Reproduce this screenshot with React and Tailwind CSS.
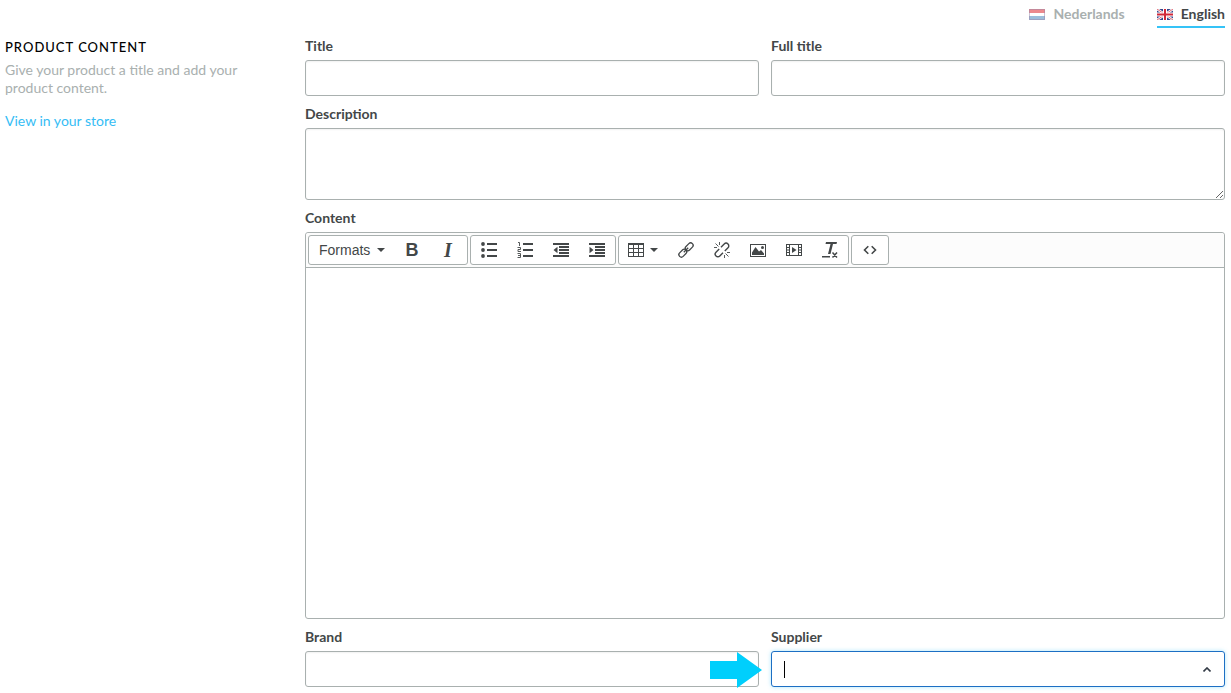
import React from "react";

function Icon({ children, className = "size-4" }) {
  return (
    <svg viewBox="0 0 16 16" className={className} fill="currentColor" aria-hidden="true">
      {children}
    </svg>
  );
}

const Caret = () => (
  <svg viewBox="0 0 8 4" className="h-1 w-2" fill="currentColor" aria-hidden="true">
    <path d="M0 0h8L4 4z" />
  </svg>
);

const BulletIcon = () => (
  <Icon>
    <circle cx="2" cy="2" r="1.900" />
    <circle cx="2" cy="8" r="1.900" />
    <circle cx="2" cy="14" r="1.900" />
    <path d="M6 1h10v2H6zM6 7h10v2H6zM6 13h10v2H6z" />
  </Icon>
);

const NumberIcon = () => (
  <svg viewBox="0 0 16 18" className="h-[18px] w-4" fill="currentColor" aria-hidden="true">
    <path d="M6 2h10v2H6zM6 8h10v2H6zM6 14h10v2H6z" />
    <g fill="none" stroke="currentColor" strokeWidth=".9">
      <path d="M1 1.500h1.500V5" />
      <path d="M.5 6.500h3v2h-2.500v2h3" />
      <path d="M.5 12.500h3v4h-3M1 14.500h2.500" />
    </g>
  </svg>
);

const OutdentIcon = () => (
  <Icon>
    <path d="M0 1h16v2H0zM6 4h10v2H6zM6 7h10v2H6zM6 10h10v2H6zM0 13h16v2H0zM4.500 4.800v6.400L.5 8z" />
  </Icon>
);

const IndentIcon = () => (
  <Icon>
    <path d="M0 1h16v2H0zM6 4h10v2H6zM6 7h10v2H6zM6 10h10v2H6zM0 13h16v2H0zM.5 4.800v6.400L4.500 8z" />
  </Icon>
);

const TableIcon = () => (
  <Icon>
    <path
      fillRule="evenodd"
      d="M0 1h16v14H0zM1 3v3h4V3zM6 3v3h4V3zM11 3v3h4V3zM1 7v3h4V7zM6 7v3h4V7zM11 7v3h4V7zM1 11v3h4v-3zM6 11v3h4v-3zM11 11v3h4v-3z"
    />
  </Icon>
);

const LinkIcon = () => (
  <Icon>
    <g fill="none" stroke="currentColor" strokeWidth="1.300">
      <rect x="-4.500" y="-2.500" width="9" height="5" rx="2.500" transform="translate(11.200 4.800) rotate(-45)" />
      <rect x="-4.500" y="-2.500" width="9" height="5" rx="2.500" transform="translate(4.800 11.200) rotate(-45)" />
      <path d="M5.800 10.200l4.400-4.400" />
    </g>
  </Icon>
);

const UnlinkIcon = () => (
  <Icon>
    <g fill="none" stroke="currentColor" strokeWidth="1.400">
      <path d="M7 5.200 10.200 2a2.600 2.600 0 0 1 3.800 3.800L10.800 9" />
      <path d="M9 10.800 5.800 14A2.600 2.600 0 0 1 2 10.200L5.200 7" />
      <path strokeWidth=".9" d="M1.500 1.500l3 3M5.500 0v3M0 5.500h3M11.500 11.500l3 3M10.500 13v3M13 10.500h3" />
    </g>
  </Icon>
);

const ImageIcon = () => (
  <Icon>
    <path fillRule="evenodd" d="M0 2h16v13H0zM1 3v11h14V3z" />
    <path d="M2 13V10.500L5.500 5 9 9.500 11 8l3 3.500V13z" />
    <circle cx="12.500" cy="5.500" r="1.500" />
  </Icon>
);

const MediaIcon = () => (
  <Icon>
    <path
      fillRule="evenodd"
      d="M0 2h16v12H0zM1 3v2h2V3zM1 6v1.500h2V6zM1 8.500V10h2V8.500zM1 11v2h2v-2zM4 3v10h8V3zM13 3v2h2V3zM13 6v1.500h2V6zM13 8.500V10h2V8.500zM13 11v2h2v-2z"
    />
    <path d="M6 5v6l4.500-3z" />
  </Icon>
);

const ClearIcon = () => (
  <Icon>
    <path d="M4 0h11l-.5 2H3.500zM8.500 2h2.500L8.500 12H6zM0 14h8v1.600H0z" />
    <path d="M10.500 10.500l4.500 5M15 10.500l-4.500 5" fill="none" stroke="currentColor" strokeWidth="1.500" />
  </Icon>
);

const CodeIcon = () => (
  <Icon>
    <path d="M6.300 4.200 2.500 8l3.800 3.800M9.700 4.200 13.500 8l-3.800 3.800" fill="none" stroke="currentColor" strokeWidth="1.600" />
  </Icon>
);

const DutchFlag = () => (
  <svg viewBox="0 0 16 11" className="h-[11px] w-4 opacity-60" aria-hidden="true">
    <path fill="#e03c42" d="M0 0h16v4H0z" />
    <path fill="#fff" d="M0 4h16v3H0z" />
    <path fill="#5b93c4" d="M0 7h16v4H0z" />
    <path fill="none" stroke="#5c3a6d" strokeOpacity=".5" d="M.5.5h15v10H.5z" />
  </svg>
);

const BritishFlag = () => (
  <svg viewBox="0 0 16 11" className="h-[11px] w-4" aria-hidden="true">
    <path fill="#33468c" d="M0 0h16v11H0z" />
    <path stroke="#fff" strokeWidth="2.400" d="M0 0l16 11M16 0L0 11" />
    <path stroke="#d8424f" strokeWidth=".8" d="M0 0l16 11M16 0L0 11" />
    <path fill="#fff" d="M6 0h4v11H6zM0 3.500h16v4H0z" />
    <path fill="#d22839" d="M7 0h2v11H7zM0 4.500h16v2H0z" />
  </svg>
);

const field =
  "block w-full rounded-[3px] border border-[#a9b0af] bg-white px-3 text-sm text-black shadow-[inset_0_1px_2px_rgba(0,0,0,0.06)] outline-none";

function Label(props) {
  return <label className="block pt-2 pb-1 text-sm leading-5 font-bold text-[#434748]" {...props} />;
}

function Tool({ label, children }) {
  return (
    <button type="button" aria-label={label} className="flex h-7 w-9 items-center justify-center">
      {children}
    </button>
  );
}

function Group({ children }) {
  return <div className="flex rounded-[3px] border border-[#a9b0af] bg-white">{children}</div>;
}

export default function App() {
  return (
    <main className="bg-white pr-1.5 pb-1.5 pl-[5px] font-['Lato','Open_Sans',sans-serif] text-[#434748]">
      <nav className="flex h-7 justify-end gap-8 text-sm font-bold" aria-label="Language">
        <a href="#nl" className="flex items-center gap-2 text-[#a9b0af]">
          <DutchFlag />
          Nederlands
        </a>
        <a href="#en" className="flex items-center gap-2 border-b-2 border-[#35c3f7] pt-0.5">
          <BritishFlag />
          English
        </a>
      </nav>

      <div className="flex">
        <aside className="w-[300px] shrink-0 pt-2 pr-14 text-sm leading-[18px] text-[#a9b0af]">
          <h1 className="mb-[3px] text-[13px] leading-[22px] font-medium tracking-[1px] text-black uppercase">
            Product content
          </h1>
          <p>Give your product a title and add your product content.</p>
          <a href="#store" className="mt-[15px] block text-[#35bdf5]">
            View in your store
          </a>
        </aside>

        <form className="min-w-0 flex-1">
          <div className="grid grid-cols-2 gap-3">
            <div>
              <Label htmlFor="title">Title</Label>
              <input id="title" className={`${field} h-9`} />
            </div>
            <div>
              <Label htmlFor="full-title">Full title</Label>
              <input id="full-title" className={`${field} h-9`} />
            </div>
          </div>

          <Label htmlFor="description">Description</Label>
          <textarea id="description" className={`${field} h-[72px] resize-y`} />

          <Label htmlFor="content">Content</Label>
          <div className="rounded-[3px] border border-[#a9b0af]">
            <div className="flex gap-0.5 rounded-t-[3px] border-b border-[#a9b0af] bg-[#fcfcfc] p-0.5" role="toolbar">
              <Group>
                <button
                  type="button"
                  className="flex h-7 w-[85px] items-center gap-[7px] pl-2.5 font-['Liberation_Sans',sans-serif] text-sm"
                >
                  Formats
                  <Caret />
                </button>
                <Tool label="Bold">
                  <span className="font-['Liberation_Sans',sans-serif] text-lg leading-none font-bold">B</span>
                </Tool>
                <Tool label="Italic">
                  <span className="font-['Liberation_Serif',serif] text-xl leading-none font-bold italic">I</span>
                </Tool>
                <span className="w-px" />
              </Group>
              <Group>
                <Tool label="Bullet list"><BulletIcon /></Tool>
                <Tool label="Numbered list"><NumberIcon /></Tool>
                <Tool label="Decrease indent"><OutdentIcon /></Tool>
                <Tool label="Increase indent"><IndentIcon /></Tool>
              </Group>
              <Group>
                <button type="button" aria-label="Table" className="flex h-7 w-[49px] items-center gap-1.5 pl-[9px]">
                  <TableIcon />
                  <Caret />
                </button>
                <Tool label="Insert link"><LinkIcon /></Tool>
                <Tool label="Remove link"><UnlinkIcon /></Tool>
                <Tool label="Insert image"><ImageIcon /></Tool>
                <Tool label="Insert video"><MediaIcon /></Tool>
                <Tool label="Clear formatting"><ClearIcon /></Tool>
              </Group>
              <Group>
                <Tool label="Source code"><CodeIcon /></Tool>
              </Group>
            </div>
            <textarea id="content" className="block h-[350px] w-full resize-none rounded-b-[3px] p-3 text-sm outline-none" />
          </div>

          <div className="grid grid-cols-2 gap-3">
            <div>
              <Label htmlFor="brand">Brand</Label>
              <div className="relative">
                <input id="brand" className={`${field} h-9`} />
                <svg
                  viewBox="0 0 52 36"
                  className="absolute top-px -right-[3px] h-9 w-[52px]"
                  fill="#00cffc"
                  aria-hidden="true"
                >
                  <path d="M0 9h27V0l25 18-25 18V27H0z" />
                </svg>
              </div>
            </div>
            <div>
              <Label htmlFor="supplier">Supplier</Label>
              <div className="relative">
                <input
                  id="supplier"
                  role="combobox"
                  aria-expanded="true"
                  className="block h-9 w-full rounded-[3px] border border-[#1d6fc4] bg-white pr-9 pl-3 text-sm shadow-[0_0_4px_rgba(53,195,247,0.4)] outline-none"
                />
                <span className="absolute top-2.5 left-[13px] h-[17px] w-px bg-black" />
                <button
                  type="button"
                  aria-label="Toggle suppliers"
                  className="absolute inset-y-0 right-0 flex w-9 items-center justify-center"
                >
                  <svg viewBox="0 0 8 5" className="h-[5px] w-2" fill="none" stroke="#333b46" strokeWidth="1.600" aria-hidden="true">
                    <path d="M.5 4.500 4 1l3.500 3.500" />
                  </svg>
                </button>
              </div>
            </div>
          </div>
        </form>
      </div>
    </main>
  );
}
